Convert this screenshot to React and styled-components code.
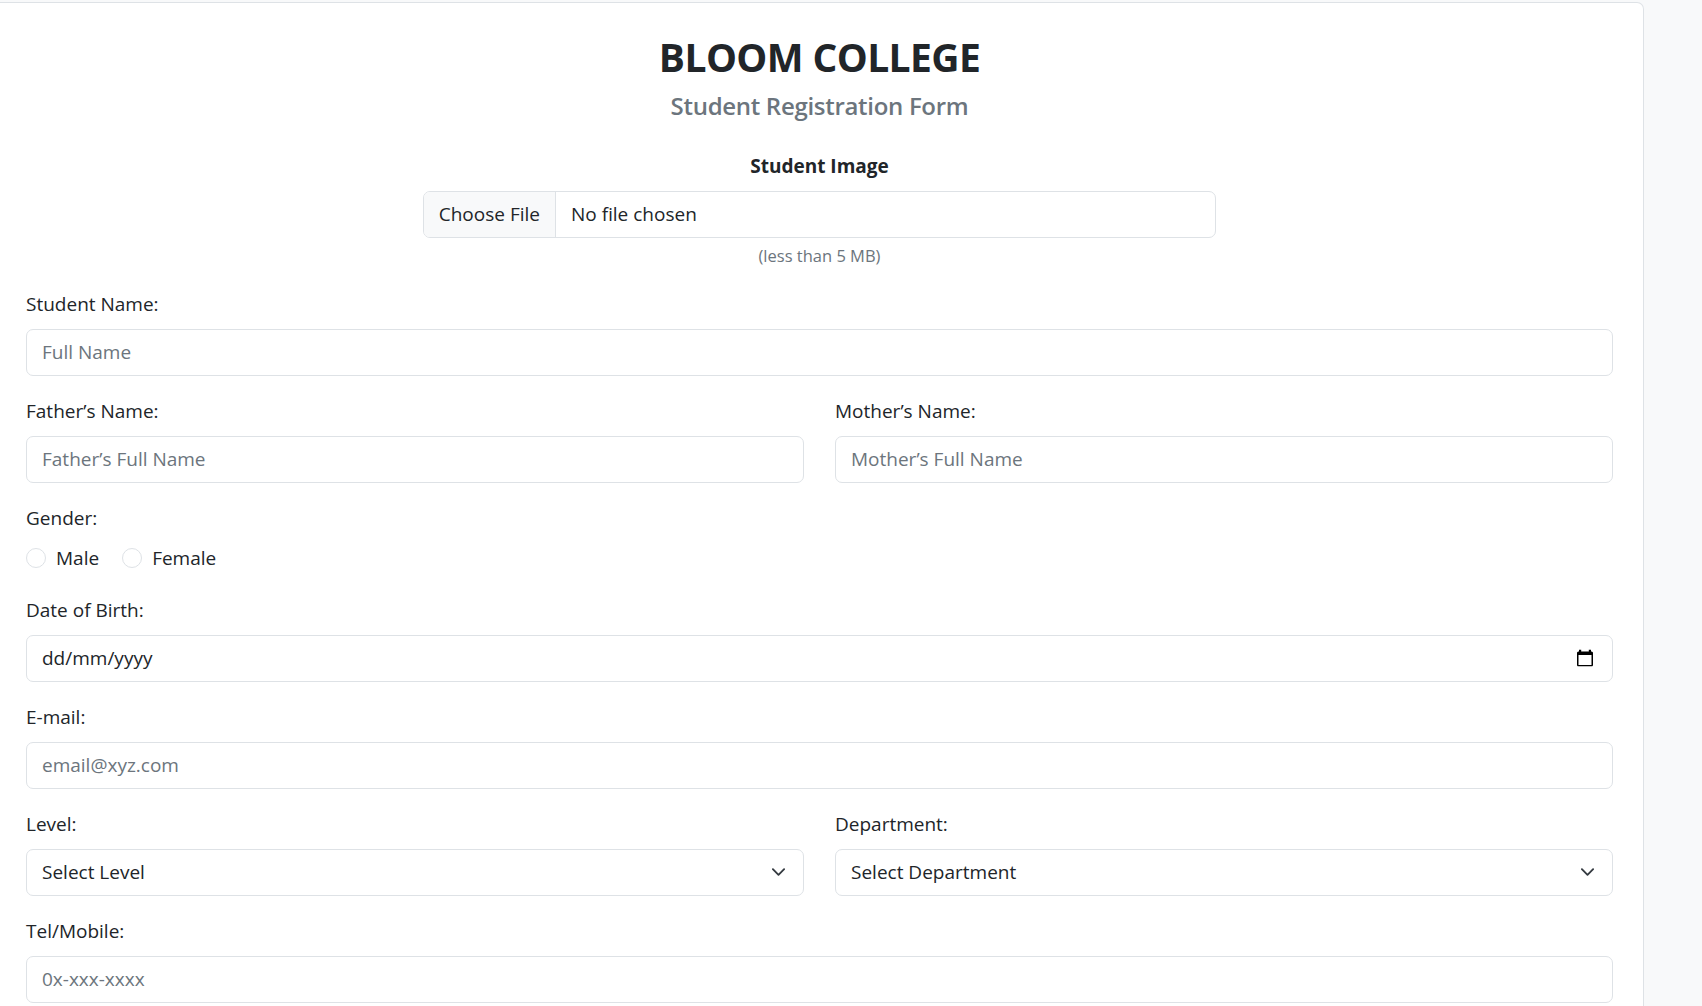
import React from 'react';
import styled, { createGlobalStyle } from 'styled-components';

const GlobalStyle = createGlobalStyle`
  html, body {
    margin: 0;
    padding: 0;
    height: 100%;
    overflow: hidden;
  }
  body {
    background: #f8f9fa;
    color: #212529;
    font-family: 'Open Sans', 'Noto Sans', Arial, sans-serif;
    font-size: 19px;
  }
  * { box-sizing: border-box; }
`;

const Page = styled.div`
  display: flex;
  align-items: flex-start;
  padding-top: 2px;
  height: 100vh;
`;

const Card = styled.div`
  width: 1644px;
  min-height: 1040px;
  background: #fff;
  border: 1px solid #dee2e6;
  border-left: none;
  border-radius: 0 7px 0 0;
  padding: 31px 30px 30px 26px;
`;

const Title = styled.h1`
  margin: 0 0 10px;
  text-align: center;
  font-size: 39px;
  font-weight: 700;
  line-height: 1.2;
  letter-spacing: -0.6px;
  color: #212529;
`;

const Subtitle = styled.h4`
  margin: 0 0 30px;
  text-align: center;
  font-size: 24px;
  font-weight: 600;
  line-height: 30px;
  letter-spacing: -0.3px;
  color: #6c757d;
`;

const FormGroup = styled.div`
  margin-bottom: 20px;
  text-align: ${props => props.$center ? 'center' : 'left'};
`;

const Label = styled.label`
  display: block;
  margin-bottom: 10px;
  line-height: 30px;
  font-size: 19px;
  font-weight: ${props => props.$bold ? 700 : 400};
  color: #212529;
`;

const TextInput = styled.input`
  display: block;
  width: 100%;
  height: 47px;
  padding: 0 15px;
  font-family: inherit;
  font-size: 19px;
  color: #212529;
  background: #fff;
  border: 1px solid #dee2e6;
  border-radius: 7px;
  outline: none;
  &::placeholder {
    color: #6c757d;
    opacity: 1;
  }
`;

const FilePicker = styled.div`
  display: flex;
  width: 50%;
  height: 47px;
  margin: 0 auto;
  border: 1px solid #dee2e6;
  border-radius: 7px;
  overflow: hidden;
  text-align: left;
`;

const FileButton = styled.div`
  display: flex;
  align-items: center;
  padding: 0 15px;
  background: #f8f9fa;
  border-right: 1px solid #dee2e6;
  color: #212529;
`;

const FileName = styled.div`
  display: flex;
  align-items: center;
  padding: 0 15px;
  color: #212529;
`;

const HelpText = styled.div`
  margin-top: 5px;
  font-size: 16.5px;
  line-height: 26px;
  color: #6c757d;
`;

const TwoCol = styled.div`
  display: grid;
  grid-template-columns: 1fr 1fr;
  column-gap: 31px;
`;

const RadioRow = styled.div`
  display: flex;
  height: 32px;
`;

const RadioOption = styled.label`
  display: flex;
  align-items: center;
  gap: 10px;
  height: 30px;
  margin-right: 23px;
  line-height: 30px;
`;

const Radio = styled.input.attrs({ type: 'radio' })`
  appearance: none;
  width: 20px;
  height: 20px;
  margin: 0;
  border: 1px solid #dee2e6;
  border-radius: 50%;
  background: #fff;
`;

const FieldWrap = styled.div`
  position: relative;
`;

const Select = styled.select`
  display: block;
  width: 100%;
  height: 47px;
  padding: 0 50px 0 15px;
  font-family: inherit;
  font-size: 19px;
  color: #212529;
  background: #fff;
  border: 1px solid #dee2e6;
  border-radius: 7px;
  appearance: none;
  outline: none;
`;

const IconSlot = styled.span`
  position: absolute;
  top: 50%;
  right: ${props => props.$right}px;
  transform: translateY(-50%);
  display: flex;
  pointer-events: none;
`;

const Chevron = () => (
  <svg width="15" height="15" viewBox="0 0 16 16">
    <path d="m2 5 6 6 6-6" fill="none" stroke="#343a40" strokeWidth="2" strokeLinecap="round" strokeLinejoin="round" />
  </svg>
);

const CalendarIcon = () => (
  <svg width="16" height="17" viewBox="0 0 16 17">
    <rect x="2" y="0" width="2.2" height="3" fill="#000" />
    <rect x="11.8" y="0" width="2.2" height="3" fill="#000" />
    <rect x="0.75" y="2.75" width="14.5" height="13.5" rx="0.8" fill="none" stroke="#000" strokeWidth="1.5" />
    <rect x="0.75" y="2.5" width="14.5" height="3" fill="#000" />
  </svg>
);

const SelectField = ({ label, options }) => (
  <FormGroup>
    <Label>{label}</Label>
    <FieldWrap>
      <Select defaultValue="">
        <option value="">{options[0]}</option>
        {options.slice(1).map(o => <option key={o}>{o}</option>)}
      </Select>
      <IconSlot $right={18}><Chevron /></IconSlot>
    </FieldWrap>
  </FormGroup>
);

export default function App() {
  return (
    <>
      <GlobalStyle />
      <Page>
        <Card>
          <Title>BLOOM COLLEGE</Title>
          <Subtitle>Student Registration Form</Subtitle>

          <FormGroup $center>
            <Label $bold>Student Image</Label>
            <FilePicker>
              <FileButton>Choose File</FileButton>
              <FileName>No file chosen</FileName>
            </FilePicker>
            <HelpText>(less than 5 MB)</HelpText>
          </FormGroup>

          <FormGroup>
            <Label>Student Name:</Label>
            <TextInput placeholder="Full Name" />
          </FormGroup>

          <TwoCol>
            <FormGroup>
              <Label>Father’s Name:</Label>
              <TextInput placeholder="Father’s Full Name" />
            </FormGroup>
            <FormGroup>
              <Label>Mother’s Name:</Label>
              <TextInput placeholder="Mother’s Full Name" />
            </FormGroup>
          </TwoCol>

          <FormGroup>
            <Label>Gender:</Label>
            <RadioRow>
              <RadioOption><Radio name="gender" value="male" />Male</RadioOption>
              <RadioOption><Radio name="gender" value="female" />Female</RadioOption>
            </RadioRow>
          </FormGroup>

          <FormGroup>
            <Label>Date of Birth:</Label>
            <FieldWrap>
              <TextInput defaultValue="dd/mm/yyyy" readOnly />
              <IconSlot $right={20}><CalendarIcon /></IconSlot>
            </FieldWrap>
          </FormGroup>

          <FormGroup>
            <Label>E-mail:</Label>
            <TextInput type="email" placeholder="email@xyz.com" />
          </FormGroup>

          <TwoCol>
            <SelectField label="Level:" options={['Select Level', '100 Level', '200 Level', '300 Level', '400 Level']} />
            <SelectField label="Department:" options={['Select Department', 'Computer Science', 'Accounting', 'Economics']} />
          </TwoCol>

          <FormGroup>
            <Label>Tel/Mobile:</Label>
            <TextInput type="tel" placeholder="0x-xxx-xxxx" />
          </FormGroup>
        </Card>
      </Page>
    </>
  );
}
